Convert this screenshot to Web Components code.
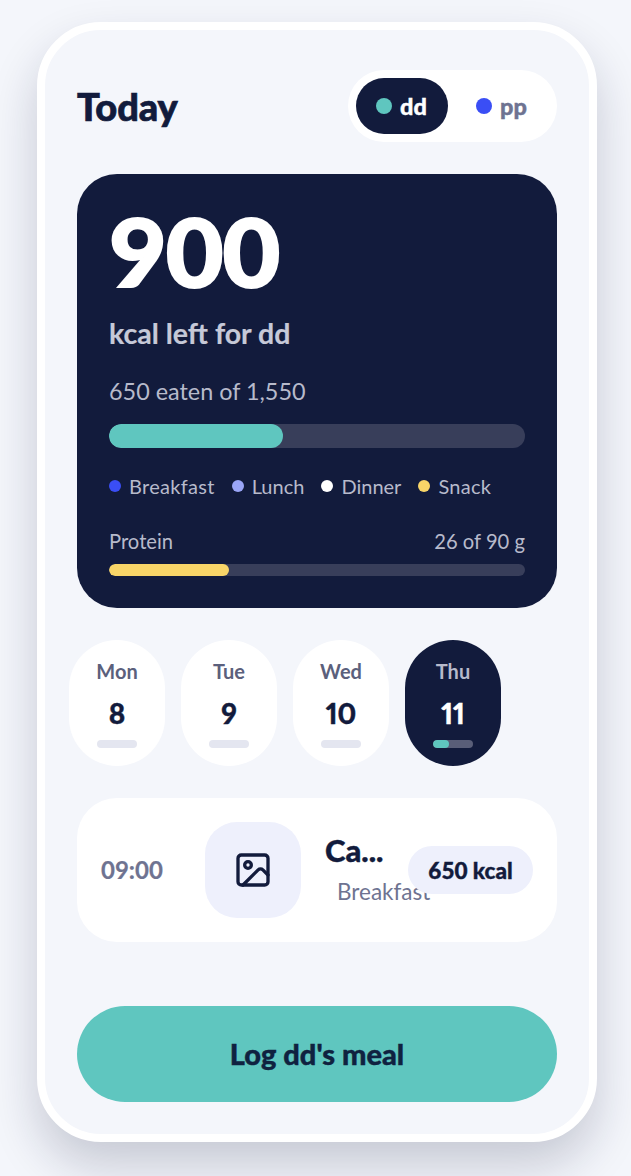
<!DOCTYPE html>
<html lang="en">
<head>
<meta charset="utf-8">
<title>Today</title>
<style>
  html, body { margin: 0; padding: 0; }
  body {
    background: #f4f6fb;
    font-family: "Lato", "Noto Sans", sans-serif;
    color: #121b3c;
  }
</style>
</head>
<body>
<phone-frame>
  <today-header></today-header>
  <summary-card left="900" person="dd" eaten="650" goal="1,550" protein="26" protein-goal="90"></summary-card>
  <day-strip>
    <day-pill name="Mon" num="8"></day-pill>
    <day-pill name="Tue" num="9"></day-pill>
    <day-pill name="Wed" num="10"></day-pill>
    <day-pill name="Thu" num="11" active></day-pill>
  </day-strip>
  <meal-row time="09:00" title="Ca..." kind="Breakfast" kcal="650 kcal"></meal-row>
  <log-button>Log dd's meal</log-button>
</phone-frame>

<script>
// Small helper so every element only has to hand over its html
class ShadowElement extends HTMLElement {
  constructor() {
    super();
    this.attachShadow({ mode: 'open' });
  }

  connectedCallback() {
    this.shadowRoot.innerHTML = this.template();
  }
}

class PhoneFrame extends ShadowElement {
  template() {
    return `
      <style>
        :host { display: block; padding: 22px 34px 34px 37px; }
        .frame {
          box-sizing: border-box;
          width: 560px;
          height: 1120px;
          padding: 40px 32px 32px;
          border: 8px solid #fff;
          border-radius: 64px;
          background: #f4f6fb;
          box-shadow: 0 24px 48px rgba(18, 27, 60, 0.2);
          display: flex;
          flex-direction: column;
        }
      </style>
      <div class="frame"><slot></slot></div>
    `;
  }
}

class TodayHeader extends ShadowElement {
  template() {
    return `
      <style>
        :host {
          display: flex;
          align-items: center;
          justify-content: space-between;
          margin-bottom: 32px;
        }
        h1 {
          margin: 0;
          font-size: 38px;
          font-weight: 900;
          letter-spacing: -0.1px;
          -webkit-text-stroke: 0.7px currentColor;
        }
        .toggle {
          display: flex;
          gap: 8px;
          padding: 8px;
          background: #fff;
          border-radius: 36px;
        }
        .opt {
          display: flex;
          align-items: center;
          gap: 8px;
          box-sizing: border-box;
          width: 92px;
          height: 56px;
          padding-left: 20px;
          border-radius: 28px;
          font-size: 23.5px;
          font-weight: 900;
          -webkit-text-stroke: 0.4px currentColor;
          color: #6e7391;
        }
        .opt + .opt { width: 93px; }
        .opt.on { background: #121b3c; color: #fff; }
        .dot { width: 16px; height: 16px; border-radius: 50%; }
      </style>
      <h1>Today</h1>
      <div class="toggle">
        <div class="opt on"><span class="dot" style="background:#5fc6bf"></span>dd</div>
        <div class="opt"><span class="dot" style="background:#3a4ef5"></span>pp</div>
      </div>
    `;
  }
}

class SummaryCard extends ShadowElement {
  template() {
    const a = (n) => this.getAttribute(n);
    // breakfast gets a touch of spacing so the legend dots land where they should
    const legend = [
      ['Breakfast', '#3a4ef5', '0.3px'],
      ['Lunch', '#9aa5f7', '0'],
      ['Dinner', '#ffffff', '0'],
      ['Snack', '#f8d568', '0.3px']
    ];
    return `
      <style>
        :host {
          display: block;
          box-sizing: border-box;
          height: 434px;
          padding: 32px;
          border-radius: 40px;
          background: #121b3c;
          color: #fff;
        }
        .left {
          font-size: 94px;
          line-height: 90px;
          font-weight: 900;
          letter-spacing: -1px;
          -webkit-text-stroke: 2px #fff;
          transform: scaleX(1.06);
          transform-origin: left center;
        }
        .label {
          margin-top: 17px;
          font-size: 28.5px;
          line-height: 40px;
          font-weight: 700;
          -webkit-text-stroke: 0.2px currentColor;
          color: #c6c9d8;
        }
        .eaten { margin-top: 22px; font-size: 23.4px; line-height: 32px; color: #b7bacb; }
        .track { background: #383e5a; overflow: hidden; }
        .track div { height: 100%; border-radius: inherit; }
        .main { margin-top: 17px; height: 24px; border-radius: 12px; }
        .legend { display: flex; gap: 17px; margin-top: 26px; font-size: 20px; line-height: 24px; color: #b7bacb; }
        .legend span { display: flex; align-items: center; gap: 8px; }
        .legend i { width: 12px; height: 12px; border-radius: 50%; }
        .protein {
          display: flex;
          justify-content: space-between;
          margin-top: 31px;
          font-size: 20.2px;
          line-height: 24px;
          color: #b7bacb;
        }
        .small { margin-top: 11px; height: 12px; border-radius: 6px; }
      </style>
      <div class="left">${a('left')}</div>
      <div class="label">kcal left for ${a('person')}</div>
      <div class="eaten">${a('eaten')} eaten of ${a('goal')}</div>
      <div class="track main"><div style="width:41.9%;background:#5fc6bf"></div></div>
      <div class="legend">
        ${legend.map(([name, color, ls]) => `<span style="letter-spacing:${ls}"><i style="background:${color}"></i>${name}</span>`).join('')}
      </div>
      <div class="protein"><span>Protein</span><span>${a('protein')} of ${a('protein-goal')} g</span></div>
      <div class="track small"><div style="width:28.9%;background:#f8d568"></div></div>
    `;
  }
}

class DayStrip extends ShadowElement {
  template() {
    return `
      <style>
        :host { display: flex; gap: 16px; margin: 32px -8px; }
      </style>
      <slot></slot>
    `;
  }
}

class DayPill extends ShadowElement {
  template() {
    const active = this.hasAttribute('active');
    return `
      <style>
        :host {
          display: flex;
          flex-direction: column;
          align-items: center;
          box-sizing: border-box;
          width: 96px;
          height: 126px;
          padding-top: 19px;
          border-radius: 48px;
          background: ${active ? '#121b3c' : '#fff'};
        }
        .name { font-size: 20px; line-height: 24px; font-weight: 700; color: ${active ? '#b7bacb' : '#5b607c'}; }
        .num {
          margin-top: 10px;
          font-size: 28px;
          line-height: 40px;
          font-weight: 900;
          font-variant-numeric: proportional-nums;
          -webkit-text-stroke: 0.4px currentColor;
          color: ${active ? '#fff' : '#121b3c'};
        }
        .bar {
          width: 40px;
          height: 8px;
          margin-top: 7px;
          border-radius: 4px;
          overflow: hidden;
          background: ${active ? '#595e78' : '#e4e6f0'};
        }
        .bar div { width: 16px; height: 100%; border-radius: 4px; background: #5fc6bf; }
      </style>
      <div class="name">${this.getAttribute('name')}</div>
      <div class="num">${this.getAttribute('num')}</div>
      <div class="bar">${active ? '<div></div>' : ''}</div>
    `;
  }
}

class MealRow extends ShadowElement {
  template() {
    const a = (n) => this.getAttribute(n);
    return `
      <style>
        :host {
          display: flex;
          align-items: center;
          gap: 24px;
          box-sizing: border-box;
          height: 144px;
          padding: 24px;
          border-radius: 40px;
          background: #fff;
        }
        .time {
          flex: 0 0 80px;
          margin-top: -2px;
          font-size: 24px;
          font-weight: 700;
          -webkit-text-stroke: 0.2px currentColor;
          color: #6e7391;
        }
        .thumb {
          flex: 0 0 96px;
          height: 96px;
          display: flex;
          align-items: center;
          justify-content: center;
          border-radius: 32px;
          background: #eef0fc;
        }
        .info { flex: 1; min-width: 0; white-space: nowrap; }
        .title { font-size: 31px; line-height: 36px; font-weight: 900; -webkit-text-stroke: 0.4px currentColor; color: #121b3c; }
        .kind { padding-left: 12px; margin-top: 8px; font-size: 22.5px; line-height: 32px; color: #6e7391; }
        .kcal {
          position: relative;
          flex: 0 0 125px;
          height: 48px;
          display: flex;
          align-items: center;
          justify-content: center;
          border-radius: 24px;
          background: #eef0fc;
          font-size: 22.5px;
          font-weight: 900;
          -webkit-text-stroke: 0.4px currentColor;
          color: #121b3c;
        }
      </style>
      <div class="time">${a('time')}</div>
      <div class="thumb">
        <svg width="40" height="40" viewBox="0 0 24 24" fill="none" stroke="#121b3c" stroke-width="2" stroke-linecap="round" stroke-linejoin="round">
          <rect x="3" y="3" width="18" height="18" rx="2"></rect>
          <circle cx="9" cy="9" r="2"></circle>
          <path d="m21 15-3.086-3.086a2 2 0 0 0-2.828 0L6 21"></path>
        </svg>
      </div>
      <div class="info">
        <div class="title">${a('title')}</div>
        <div class="kind">${a('kind')}</div>
      </div>
      <div class="kcal">${a('kcal')}</div>
    `;
  }
}

class LogButton extends ShadowElement {
  template() {
    return `
      <style>
        :host {
          display: flex;
          align-items: center;
          justify-content: center;
          flex: none;
          height: 96px;
          margin-top: auto;
          padding-bottom: 2px;
          box-sizing: border-box;
          border-radius: 48px;
          background: #5fc6bf;
          font-size: 29px;
          font-weight: 900;
          -webkit-text-stroke: 0.4px currentColor;
          color: #0f2240;
        }
      </style>
      <slot></slot>
    `;
  }
}

customElements.define('phone-frame', PhoneFrame);
customElements.define('today-header', TodayHeader);
customElements.define('summary-card', SummaryCard);
customElements.define('day-strip', DayStrip);
customElements.define('day-pill', DayPill);
customElements.define('meal-row', MealRow);
customElements.define('log-button', LogButton);
</script>
</body>
</html>
